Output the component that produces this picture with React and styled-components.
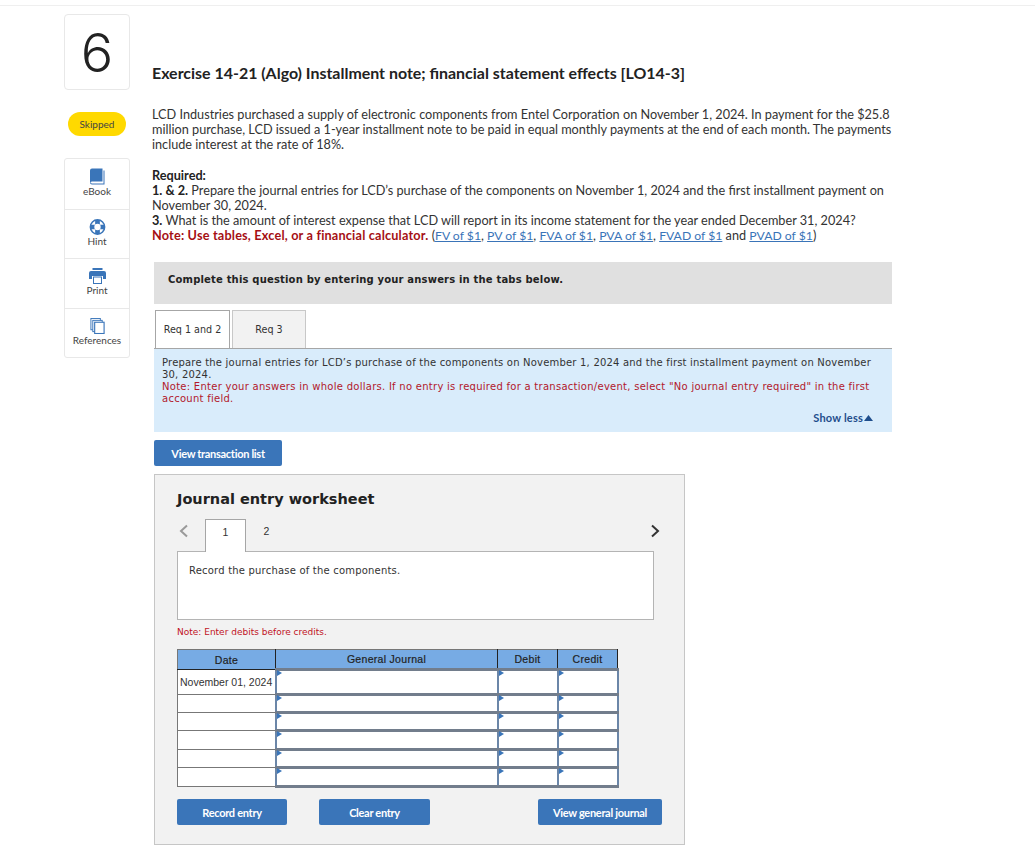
import React from 'react'
import styled, { createGlobalStyle } from 'styled-components'

const Global = createGlobalStyle`
  html, body { margin: 0; padding: 0; background: #fff; }
  * { box-sizing: border-box; }
`
const Page = styled.div`
  width: 1035px;
  height: 857px;
  overflow: hidden;
  border-top: 1px solid #efefef;
  margin-top: 5px;
  display: flex;
  padding: 8px 0 0 64px;
  gap: 22px;
  font-family: "Liberation Sans", Arial, sans-serif;
`
const Side = styled.aside`
  width: 66px;
  flex: none;
  display: flex;
  flex-direction: column;
  align-items: center;
`
const NumberBox = styled.div`
  width: 66px;
  height: 76px;
  border: 1px solid #e8e8e8;
  border-radius: 4px;
  display: flex;
  align-items: center;
  justify-content: center;
  font-family: "Inter", sans-serif;
  font-size: 54px;
  font-weight: 300;
  color: #222;
`
const Badge = styled.div`
  margin-top: 22px;
  width: 58px;
  height: 24px;
  border-radius: 12px;
  background: #ffd900;
  color: #444;
  font-family: "Lato", sans-serif;
  font-size: 10px;
  display: flex;
  align-items: center;
  justify-content: center;
`
const Tools = styled.div`
  margin-top: 22px;
  width: 66px;
  border: 1px solid #e8e8e8;
  border-radius: 3px;
`
const Tool = styled.div`
  height: ${p => p.$h}px;
  border-top: ${p => (p.$first ? 'none' : '1px solid #e8e8e8')};
  display: flex;
  flex-direction: column;
  align-items: center;
  justify-content: flex-start;
  padding-top: 9px;
  font-family: "Lato", sans-serif;
  font-size: 10px;
  line-height: 12px;
  color: #444;
`
const Main = styled.main`
  width: 744px;
  flex: none;
`
const Title = styled.h1`
  margin: 49px 0 0;
  font-family: "Lato", sans-serif;
  font-size: 15.95px;
  font-weight: 700;
  line-height: 20px;
  color: #222;
`
const Para = styled.p`
  margin: ${p => p.$top}px 0 0;
  width: 744px;
  font-family: "Lato", sans-serif;
  font-size: 12.7px;
  line-height: 15px;
  color: #333;
  b { color: #222; }
`
const Red = styled.b`
  color: #a50f14 !important;
  letter-spacing: 0.18px;
`
const Lnk = styled.a`
  color: #3a74b8;
  font-size: 12.2px;
  text-decoration: underline;
`
const Grey = styled.div`
  margin: 19px 0 0 2px;
  width: 738px;
  height: 42px;
  background: #e0e0e0;
  padding: 0 0 8px 14px;
  display: flex;
  align-items: center;
  font-family: "DejaVu Sans", sans-serif;
  font-size: 10px;
  letter-spacing: 0.18px;
  font-weight: 700;
  color: #222;
`
const Tabs = styled.div`
  margin: 6px 0 0 2px;
  width: 738px;
  display: flex;
  gap: 2px;
  padding-left: 1px;
  border-bottom: 1px solid #a6a6a6;
`
const Tab = styled.div`
  width: ${p => p.$w}px;
  height: 38px;
  margin-bottom: ${p => (p.$on ? '-1px' : '0')};
  background: ${p => (p.$on ? '#fff' : '#f2f2f2')};
  border: 1px solid ${p => (p.$on ? '#a6a6a6' : '#c8c8c8')};
  border-bottom: ${p => (p.$on ? 'none' : '0')};
  display: flex;
  align-items: center;
  justify-content: center;
  font-family: "DejaVu Sans", sans-serif;
  font-size: 9.6px;
  color: #333;
`
const Info = styled.div`
  margin-left: 2px;
  width: 738px;
  height: 83px;
  background: #d9ecfb;
  padding: 8px 8px 0;
  position: relative;
  font-family: "DejaVu Sans", sans-serif;
  font-size: 10px;
  line-height: 12px;
  letter-spacing: 0.2px;
  color: #333;
`
const InfoNote = styled.div`
  color: #b2182b;
  letter-spacing: 0.27px;
`
const ShowLess = styled.div`
  position: absolute;
  right: 19px;
  top: 63px;
  display: flex;
  align-items: center;
  gap: 1px;
  font-family: "Lato", sans-serif;
  font-weight: 700;
  font-size: 11px;
  letter-spacing: 0.2px;
  color: #1f4e8c;
`
const Btn = styled.div`
  width: ${p => p.$w}px;
  height: 26px;
  border-radius: 2px;
  background: #3a75b9;
  color: #fff;
  display: flex;
  align-items: center;
  justify-content: center;
  font-family: "Lato", sans-serif;
  font-size: 11px;
  font-weight: 700;
  letter-spacing: -0.3px;
`
const ListBtn = styled(Btn)`
  margin: 8px 0 0 2px;
`
const Sheet = styled.section`
  margin: 8px 0 0 2px;
  width: 531px;
  height: 371px;
  background: #f2f2f2;
  border: 1px solid #c6c6c6;
  padding: 14px 22px 0;
`
const SheetTitle = styled.h2`
  margin: 0;
  font-family: "DejaVu Sans", sans-serif;
  font-size: 14.5px;
  font-weight: 700;
  line-height: 20px;
  color: #222;
`
const Steps = styled.div`
  margin-top: 10px;
  width: 477px;
  display: flex;
  align-items: stretch;
  height: 33px;
  position: relative;
`
const Arrow = styled.div`
  width: 28px;
  display: flex;
  align-items: center;
  padding: 0 0 9px 2px;
`
const NextArrow = styled.div`
  margin-left: auto;
  display: flex;
  align-items: center;
  padding: 0 0 9px;
  margin-right: -6px;
`
const Step = styled.div`
  width: 41px;
  height: ${p => (p.$on ? '33px' : '32px')};
  padding-bottom: 8px;
  background: ${p => (p.$on ? '#fff' : 'transparent')};
  border: ${p => (p.$on ? '1px solid #a6a6a6' : 'none')};
  border-bottom: none;
  position: relative;
  z-index: 1;
  display: flex;
  align-items: center;
  justify-content: center;
  font-family: "Liberation Sans", sans-serif;
  font-size: 10.5px;
  color: #333;
`
const Prompt = styled.div`
  margin-top: -1px;
  width: 477px;
  height: 69px;
  background: #fff;
  border: 1px solid #b4b4b4;
  padding: 13px 11px;
  font-family: "DejaVu Sans", sans-serif;
  font-size: 10px;
  letter-spacing: 0.2px;
  line-height: 12px;
  color: #333;
`
const DebitNote = styled.div`
  margin-top: 6px;
  font-family: "DejaVu Sans", sans-serif;
  font-size: 9px;
  line-height: 12px;
  color: #c1121f;
`
const Table = styled.table`
  margin-top: 11px;
  border-collapse: collapse;
  table-layout: fixed;
  width: 440px;
  font-family: "Liberation Sans", sans-serif;
`
const Th = styled.th`
  height: 20px;
  padding: 0;
  background: #77abe4;
  border: 1px solid #222;
  border-top-color: #777;
  font-size: 10.5px;
  font-weight: 400;
  letter-spacing: 0.3px;
  color: #222;
  -webkit-text-stroke: 0.2px #222;
  &:first-child { border-left-color: #777; }
`
const DateCell = styled.td`
  height: ${p => p.$h}px;
  padding: 0 0 0 2px;
  background: #fff;
  border: 1px solid #777;
  font-size: 10.5px;
  color: #333;
  white-space: nowrap;
`
const EntryCell = styled.td`
  height: ${p => p.$h}px;
  padding: 0;
  background: #fff;
  border-style: solid;
  border-color: #727d8c;
  border-width: 3px 2px;
  border-left-color: #6b86a8;
  border-right-color: #6b86a8;
  position: relative;
  &::after {
    content: '';
    position: absolute;
    top: -1px;
    left: 0;
    border-left: 5px solid #3a75b9;
    border-top: 3px solid transparent;
    border-bottom: 3px solid transparent;
  }
`
const Actions = styled.div`
  margin-top: 11px;
  width: 485px;
  display: flex;
  justify-content: space-between;
`
const Pair = styled.div`
  display: flex;
  gap: 32px;
`

const BookIcon = () => (
  <svg width="16" height="17" viewBox="0 0 16 17">
    <path d="M1 2.5A2 2 0 0 1 3 .5h10.5v13H3a2 2 0 0 0-2 2z" fill="#3a75b9" />
    <path d="M1 14.5a2 2 0 0 0 2 2h12.5V2.5h-1V15.5H3a1 1 0 0 1-1-1z" fill="#3a75b9" />
  </svg>
)
const HintIcon = () => (
  <svg width="17" height="16" viewBox="0 0 17 17">
    <circle cx="8.5" cy="8.5" r="7.6" fill="#fff" stroke="#3a75b9" strokeWidth="1.6" />
    <path d="M6 1h5v15H6zM1 6h15v5H1z" fill="#3a75b9" />
    <circle cx="8.5" cy="8.5" r="3.4" fill="#fff" />
  </svg>
)
const PrintIcon = () => (
  <svg width="17" height="16" viewBox="0 0 17 16">
    <path d="M3.5 0h10v2h-10zM2 3h13a2 2 0 0 1 2 2v6h-3V8H3v3H0V5a2 2 0 0 1 2-2z" fill="#3a75b9" />
    <rect x="4.5" y="9" width="8" height="6.5" fill="#fff" stroke="#3a75b9" />
  </svg>
)
const RefIcon = () => (
  <svg width="15" height="16" viewBox="0 0 15 17" fill="#fff" stroke="#3a75b9">
    <rect x="0.5" y="0.5" width="10" height="12" />
    <rect x="2.5" y="2.5" width="10" height="12" />
    <rect x="4.5" y="4.5" width="10" height="12" strokeWidth="1.2" />
  </svg>
)
const Chevron = ({ color, flip }) => (
  <svg width="10" height="14" viewBox="0 0 10 14" fill="none" stroke={color} strokeWidth="2">
    <path d={flip ? 'M2 1.5 8 7l-6 5.5' : 'M8 1.5 2 7l6 5.5'} />
  </svg>
)

const dates = ['November 01, 2024', '', '', '', '', '']
const heights = [25, 18, 18, 19, 18, 19]

export default function App() {
  return (
    <Page>
      <Global />
      <Side>
        <NumberBox>6</NumberBox>
        <Badge>Skipped</Badge>
        <Tools>
          <Tool $h={50} $first><BookIcon />eBook</Tool>
          <Tool $h={49}><HintIcon />Hint</Tool>
          <Tool $h={50}><PrintIcon />Print</Tool>
          <Tool $h={49}><RefIcon />References</Tool>
        </Tools>
      </Side>
      <Main>
        <Title>Exercise 14-21 (Algo) Installment note; financial statement effects [LO14-3]</Title>
        <Para $top={24}>
          LCD Industries purchased a supply of electronic components from Entel Corporation on November 1, 2024. In payment for the $25.8 million purchase, LCD issued a 1-year installment note to be paid in equal monthly payments at the end of each month. The payments include interest at the rate of 18%.
        </Para>
        <Para $top={16}>
          <b>Required:</b><br />
          <b>1. &amp; 2.</b> Prepare the journal entries for LCD’s purchase of the components on November 1, 2024 and the first installment payment on November 30, 2024.<br />
          <b>3.</b> What is the amount of interest expense that LCD will report in its income statement for the year ended December 31, 2024?<br />
          <Red>Note: Use tables, Excel, or a financial calculator.</Red> (<Lnk>FV of $1</Lnk>, <Lnk>PV of $1</Lnk>, <Lnk>FVA of $1</Lnk>, <Lnk>PVA of $1</Lnk>, <Lnk>FVAD of $1</Lnk> and <Lnk>PVAD of $1</Lnk>)
        </Para>
        <Grey>Complete this question by entering your answers in the tabs below.</Grey>
        <Tabs>
          <Tab $w={75} $on>Req 1 and 2</Tab>
          <Tab $w={74}>Req 3</Tab>
        </Tabs>
        <Info>
          Prepare the journal entries for LCD’s purchase of the components on November 1, 2024 and the first installment payment on November 30, 2024.
          <InfoNote>Note: Enter your answers in whole dollars. If no entry is required for a transaction/event, select "No journal entry required" in the first account field.</InfoNote>
          <ShowLess>
            Show less
            <svg width="9" height="8" viewBox="0 0 9 8"><path d="M4.5 1 9 7H0z" fill="#1f4e8c" /></svg>
          </ShowLess>
        </Info>
        <ListBtn $w={128}>View transaction list</ListBtn>
        <Sheet>
          <SheetTitle>Journal entry worksheet</SheetTitle>
          <Steps>
            <Arrow><Chevron color="#9a9a9a" /></Arrow>
            <Step $on>1</Step>
            <Step>2</Step>
            <NextArrow><Chevron color="#333" flip /></NextArrow>
          </Steps>
          <Prompt>Record the purchase of the components.</Prompt>
          <DebitNote>Note: Enter debits before credits.</DebitNote>
          <Table>
            <colgroup>
              <col width="98" /><col width="222" /><col width="60" /><col width="60" />
            </colgroup>
            <thead>
              <tr><Th>Date</Th><Th>General Journal</Th><Th>Debit</Th><Th>Credit</Th></tr>
            </thead>
            <tbody>
              {dates.map((d, i) => (
                <tr key={i}>
                  <DateCell $h={heights[i]}>{d}</DateCell>
                  <EntryCell $h={heights[i]} />
                  <EntryCell $h={heights[i]} />
                  <EntryCell $h={heights[i]} />
                </tr>
              ))}
            </tbody>
          </Table>
          <Actions>
            <Pair>
              <Btn $w={110}>Record entry</Btn>
              <Btn $w={111}>Clear entry</Btn>
            </Pair>
            <Btn $w={124}>View general journal</Btn>
          </Actions>
        </Sheet>
      </Main>
    </Page>
  )
}
